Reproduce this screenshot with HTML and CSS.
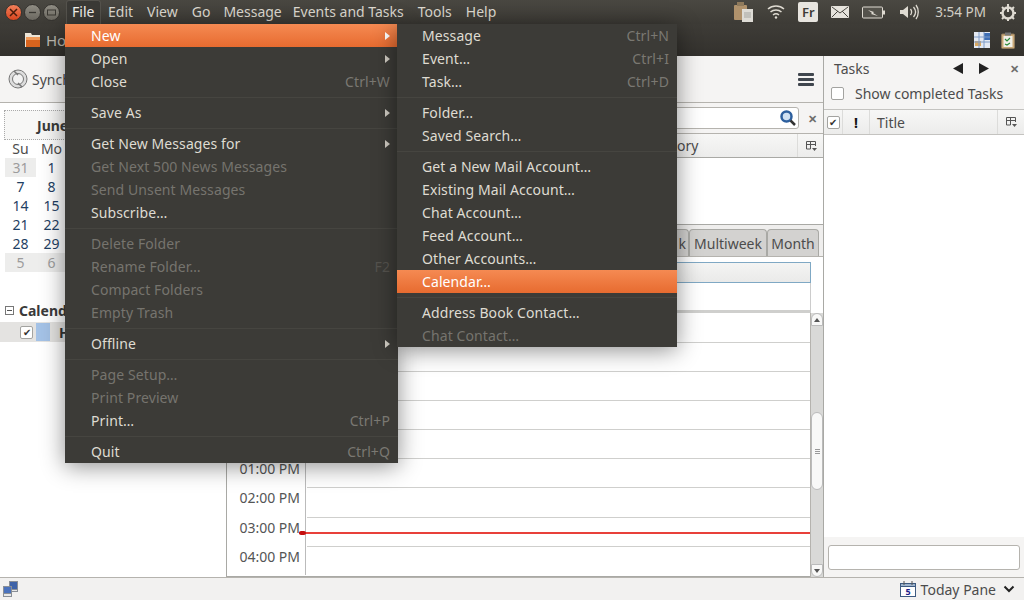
FILE: index.html
```html
<!DOCTYPE html>
<html lang="en">
  <head>
    <meta charset="UTF-8" />
    <title>Thunderbird</title>
    <link rel="stylesheet" href="styles.css">
  </head>

  <body>
    <!-- top panel with global menu -->
    <div class="panel">
      <div class="win-buttons">
        <span class="win-btn win-close">
          <svg width="9" height="9" viewBox="0 0 9 9" fill="none" stroke="#4a1c0c" stroke-width="1.500"><path d="M1 1l7 7M8 1L1 8" /></svg>
        </span>
        <span class="win-btn">
          <svg width="9" height="9" viewBox="0 0 9 9" fill="none" stroke="#3a3833" stroke-width="1.300"><path d="M1 4.500h7" /></svg>
        </span>
        <span class="win-btn">
          <svg width="9" height="9" viewBox="0 0 9 9" fill="none" stroke="#3a3833"><rect x="0.500" y="2" width="8" height="5" /></svg>
        </span>
      </div>
      <nav class="menubar">
        <span class="menubar-item active">File</span>
        <span class="menubar-item">Edit</span>
        <span class="menubar-item">View</span>
        <span class="menubar-item item-go">Go</span>
        <span class="menubar-item">Message</span>
        <span class="menubar-item item-events">Events and Tasks</span>
        <span class="menubar-item">Tools</span>
        <span class="menubar-item">Help</span>
      </nav>
      <div class="indicators">
        <svg width="21" height="24" viewBox="0 0 21 24">
          <rect x="1" y="5" width="13" height="15" rx="1" fill="#b0926c" />
          <rect x="4" y="2" width="7" height="4" fill="#8f7a5c" />
          <rect x="9" y="9" width="11" height="13" fill="#dedcd6" />
          <path d="M11 13h7M11 15h7M11 17h7" stroke="#a5a5a0" />
        </svg>
        <svg width="18" height="24" viewBox="0 0 18 24" fill="none" stroke="#dfdbd2" stroke-width="1.500">
          <path d="M1 9c4.500-4 11.500-4 16 0M3.500 12c3-2.700 8-2.700 11 0M6 15c1.800-1.400 4.200-1.400 6 0" />
          <circle cx="9" cy="17.500" r="1.200" fill="#dfdbd2" stroke="none" />
        </svg>
        <span class="lang-icon">Fr</span>
        <svg width="18" height="24" viewBox="0 0 18 24">
          <rect x="0" y="6" width="18" height="12" rx="1" fill="#e6e3dc" />
          <path d="M1 7l8 6 8-6M1 17l6-6M17 17l-6-6" fill="none" stroke="#4a4842" />
        </svg>
        <svg width="24" height="24" viewBox="0 0 24 24">
          <rect x="0.500" y="7" width="20" height="11" rx="1" fill="#55534c" stroke="#dfdbd2" />
          <rect x="21" y="10.500" width="2" height="4" fill="#dfdbd2" />
          <path d="M6 10l6 2-1 1 5 3-7-2 1-1z" fill="#dfdbd2" />
        </svg>
        <svg width="20" height="24" viewBox="0 0 20 24">
          <path d="M1 10h3l5-4v12l-5-4H1z" fill="#dfdbd2" />
          <path d="M11.500 9c1.500 2 1.500 4 0 6M14.500 7c2.500 3 2.500 7 0 10M17 5c3 4 3 10 0 14" fill="none" stroke="#dfdbd2" stroke-width="1.300" />
        </svg>
        <span class="clock">3:54 PM</span>
        <svg width="18" height="24" viewBox="0 0 18 24" fill="none" stroke="#dfdbd2">
          <circle cx="9" cy="13" r="5.500" stroke-width="2.500" />
          <path d="M9 4v8" stroke-width="2" />
          <path d="M9 5v2M9 18v3M1 13h2M15 13h2M3 7l2 2M13 17l2 2M15 7l-2 2M5 17l-2 2" stroke-width="2" />
        </svg>
      </div>
    </div>

    <!-- tab bar -->
    <div class="tabbar">
      <div class="tab-home">
        <svg width="17" height="16" viewBox="0 0 17 16">
          <path d="M1 1h6l1 2h8v12H1z" fill="#ece4d6" />
          <rect x="2" y="5" width="14" height="10" fill="#d9641e" />
          <rect x="2" y="5" width="14" height="3" fill="#ef9a5a" />
        </svg>
        <span>Ho</span>
      </div>
      <div class="tabbar-icons">
        <svg width="16" height="16" viewBox="0 0 16 16">
          <rect width="16" height="16" fill="#e4e9f2" />
          <rect x="10" y="1" width="6" height="7" fill="#3f6fb5" />
          <rect x="1" y="9" width="6" height="5" fill="#d9a860" />
          <path d="M0 5h16M0 10h16M5 0v16M10 0v16" stroke="#7f9cc8" />
        </svg>
        <svg width="14" height="17" viewBox="0 0 14 17">
          <rect x="0.500" y="2" width="13" height="14.500" rx="1" fill="#c9a878" stroke="#8f7a5c" />
          <rect x="2.500" y="4" width="9" height="11" fill="#f1efe8" />
          <rect x="4" y="0.500" width="6" height="3" fill="#777" />
          <path d="M4 7l2 2 3-3M4 12l2 1 3-2" fill="none" stroke="#2a8a3a" stroke-width="1.200" />
        </svg>
      </div>
    </div>

    <div class="window">
      <div class="content">
        <div class="toolbar">
          <div class="sync">
            <svg width="22" height="24" viewBox="0 0 22 24" fill="none" stroke="#777">
              <circle cx="11" cy="12" r="9" fill="#ddd" />
              <circle cx="11" cy="12" r="5.500" fill="#f2f2f2" />
              <path d="M7 4l4 4M15 20l-4-4" stroke-width="1.500" />
            </svg>
            <span>Synch</span>
          </div>
          <div class="hamburger"><i></i><i></i><i></i></div>
        </div>

        <div class="panes">
          <aside class="sidebar">
            <div class="month-head"><b>June</b></div>
            <div class="month-grid">
              <span class="dow">Su</span><span class="dow">Mo</span>
              <span class="other">31</span><span>1</span>
              <span>7</span><span>8</span>
              <span>14</span><span>15</span>
              <span>21</span><span>22</span>
              <span>28</span><span>29</span>
              <span class="other">5</span><span class="other">6</span>
            </div>
            <div class="cal-title"><span class="minus"></span><b>Calend</b></div>
            <div class="cal-row">
              <span class="check checked">✔</span>
              <span class="swatch"></span>
              <b>H</b>
            </div>
          </aside>

          <main class="centre">
            <div class="search-row">
              <div class="search-box">
                <svg width="18" height="18" viewBox="0 0 18 18" fill="none">
                  <circle cx="7.500" cy="7.500" r="5" stroke="#2d5f9e" stroke-width="2.500" fill="#cfe0f2" />
                  <path d="M11.500 11.500l4.500 4.500" stroke="#333" stroke-width="2.500" />
                </svg>
              </div>
              <span class="close-x">✕</span>
            </div>
            <div class="list-head">
              <span class="list-col">ory</span>
              <span class="col-picker">
                <svg width="12" height="12" viewBox="0 0 12 12" fill="none" stroke="#555">
                  <path d="M1.500 9V1.500h9V6M1.500 4.500h9M5.500 1.500V9H1.500" />
                  <path d="M7 8h5l-2.500 3z" fill="#555" stroke="none" />
                </svg>
              </span>
            </div>
            <div class="list-body"></div>
            <div class="view-tabs">
              <span class="view-tab tab-week">k</span>
              <span class="view-tab tab-multi">Multiweek</span>
              <span class="view-tab tab-month">Month</span>
            </div>
            <div class="day-view">
              <div class="day-head-wrap"><div class="day-head"></div></div>
              <div class="allday"></div>
              <div class="hours">
                <div class="hours-scroll">
                  <div class="hour"><span class="hour-label"></span><span class="hour-cell"></span></div>
                  <div class="hour"><span class="hour-label"></span><span class="hour-cell"></span></div>
                  <div class="hour"><span class="hour-label"></span><span class="hour-cell"></span></div>
                  <div class="hour"><span class="hour-label"></span><span class="hour-cell"></span></div>
                  <div class="hour"><span class="hour-label"></span><span class="hour-cell"></span></div>
                  <div class="hour"><span class="hour-label">01:00 PM</span><span class="hour-cell"></span></div>
                  <div class="hour"><span class="hour-label">02:00 PM</span><span class="hour-cell"></span></div>
                  <div class="hour"><span class="hour-label">03:00 PM</span><span class="hour-cell now"></span></div>
                  <div class="hour"><span class="hour-label">04:00 PM</span><span class="hour-cell"></span></div>
                </div>
                <div class="scrollbar">
                  <span class="arrow arrow-up"></span>
                  <div class="track">
                    <div class="thumb"><i></i><i></i><i></i></div>
                  </div>
                  <span class="arrow arrow-down"></span>
                </div>
              </div>
            </div>
          </main>
        </div>
      </div>

      <aside class="tasks">
        <div class="tasks-head">
          <span class="tasks-title">Tasks</span>
          <svg class="tasks-nav" width="10" height="11" viewBox="0 0 10 11"><path d="M10 0v11L0 5.500z" /></svg>
          <svg class="tasks-nav" width="10" height="11" viewBox="0 0 10 11"><path d="M0 0v11l10-5.500z" /></svg>
          <span class="close-x">✕</span>
        </div>
        <div class="tasks-option"><span class="check"></span>Show completed Tasks</div>
        <div class="tasks-cols">
          <span class="tc tc-check"><span class="check checked">✔</span></span>
          <span class="tc tc-prio"><b>!</b></span>
          <span class="tc tc-title">Title</span>
          <span class="tc tc-pick">
            <svg width="12" height="12" viewBox="0 0 12 12" fill="none" stroke="#555">
              <path d="M1.500 9V1.500h9V6M1.500 4.500h9M5.500 1.500V9H1.500" />
              <path d="M7 8h5l-2.500 3z" fill="#555" stroke="none" />
            </svg>
          </span>
        </div>
        <div class="tasks-list"></div>
        <div class="tasks-foot"><div class="task-input"></div></div>
      </aside>
    </div>

    <footer class="statusbar">
      <svg width="18" height="18" viewBox="0 0 18 18">
        <rect x="8.500" y="1.500" width="8" height="8" fill="#3f63a8" stroke="#8a8f96" />
        <rect x="8.500" y="9.500" width="8" height="2" fill="#e8e8e8" stroke="#8a8f96" />
        <rect x="2.500" y="6.500" width="8" height="7" fill="#4a72bd" stroke="#8a8f96" />
        <rect x="2.500" y="13.500" width="8" height="3" fill="#e8e8e8" stroke="#8a8f96" />
      </svg>
      <div class="today-pane">
        <svg width="16" height="16" viewBox="0 0 16 16">
          <rect x="0.500" y="2.500" width="15" height="13" fill="#fff" stroke="#3d5a80" />
          <rect x="0.500" y="2.500" width="15" height="3" fill="#9db3cc" stroke="#3d5a80" />
          <path d="M4 0v4M12 0v4" stroke="#555" />
          <text x="8" y="14" text-anchor="middle" class="cal-day">5</text>
        </svg>
        <span>Today Pane</span>
        <svg class="chevron" width="12" height="8" viewBox="0 0 12 8" fill="none" stroke="#222" stroke-width="2">
          <path d="M1.500 1.500L6 6l4.500-4.500" />
        </svg>
      </div>
    </footer>

    <!-- open menus -->
    <div class="menu file-menu">
      <div class="menu-item hot"><span>New</span><i class="caret"></i></div>
      <div class="menu-item"><span>Open</span><i class="caret"></i></div>
      <div class="menu-item"><span>Close</span><em>Ctrl+W</em></div>
      <hr />
      <div class="menu-item"><span>Save As</span><i class="caret"></i></div>
      <hr />
      <div class="menu-item"><span>Get New Messages for</span><i class="caret"></i></div>
      <div class="menu-item off"><span>Get Next 500 News Messages</span></div>
      <div class="menu-item off"><span>Send Unsent Messages</span></div>
      <div class="menu-item"><span>Subscribe…</span></div>
      <hr />
      <div class="menu-item off"><span>Delete Folder</span></div>
      <div class="menu-item off"><span>Rename Folder…</span><em>F2</em></div>
      <div class="menu-item off"><span>Compact Folders</span></div>
      <div class="menu-item off"><span>Empty Trash</span></div>
      <hr />
      <div class="menu-item"><span>Offline</span><i class="caret"></i></div>
      <hr />
      <div class="menu-item off"><span>Page Setup…</span></div>
      <div class="menu-item off"><span>Print Preview</span></div>
      <div class="menu-item"><span>Print…</span><em>Ctrl+P</em></div>
      <hr />
      <div class="menu-item"><span>Quit</span><em>Ctrl+Q</em></div>
    </div>

    <div class="menu new-menu">
      <div class="menu-item"><span>Message</span><em>Ctrl+N</em></div>
      <div class="menu-item"><span>Event…</span><em>Ctrl+I</em></div>
      <div class="menu-item"><span>Task…</span><em>Ctrl+D</em></div>
      <hr />
      <div class="menu-item"><span>Folder…</span></div>
      <div class="menu-item"><span>Saved Search…</span></div>
      <hr />
      <div class="menu-item"><span>Get a New Mail Account…</span></div>
      <div class="menu-item"><span>Existing Mail Account…</span></div>
      <div class="menu-item"><span>Chat Account…</span></div>
      <div class="menu-item"><span>Feed Account…</span></div>
      <div class="menu-item"><span>Other Accounts…</span></div>
      <div class="menu-item hot"><span>Calendar…</span></div>
      <hr />
      <div class="menu-item"><span>Address Book Contact…</span></div>
      <div class="menu-item off"><span>Chat Contact…</span></div>
    </div>
  </body>
</html>
```

FILE: styles.css
```css
* {
  margin: 0;
  padding: 0;
  box-sizing: border-box;
}
html,
body {
  width: 1024px;
  height: 600px;
  overflow: hidden;
}
body {
  font-family: "Noto Sans", sans-serif;
  font-size: 14px;
  color: #4c4c4c;
  background-color: #f2f1f0;
  display: flex;
  flex-direction: column;
}

/* panel */
.panel {
  height: 24px;
  flex: none;
  display: flex;
  align-items: center;
  background: linear-gradient(#4a4842, #3d3b36);
  color: #dfdbd2;
}
.win-buttons {
  display: flex;
  gap: 2px;
  width: 66px;
  padding-left: 5px;
}
.win-btn {
  width: 17px;
  height: 17px;
  display: flex;
  align-items: center;
  justify-content: center;
  border-radius: 50%;
  background: linear-gradient(#8f8c83, #6b6860);
  border: 1px solid #35332f;
}
.win-close {
  background: linear-gradient(#f2805a, #d9451f);
}
.menubar {
  display: flex;
  height: 24px;
}
.menubar-item {
  padding: 0 7px;
  line-height: 24px;
  white-space: nowrap;
}
.menubar-item.active {
  width: 35px;
  padding: 0 5px;
  color: #f5f3ee;
  background-color: #3b3a36;
  border: 1px solid #55534d;
  border-bottom: none;
  border-radius: 3px 3px 0 0;
  line-height: 22px;
}
.menubar-item.item-go {
  padding-right: 6px;
}
.menubar-item.item-events {
  margin-left: -3px;
}
.indicators {
  margin-left: auto;
  display: flex;
  align-items: center;
  gap: 13px;
  padding-right: 7px;
}
.lang-icon {
  width: 20px;
  height: 20px;
  border-radius: 2px;
  background-color: #e8e5df;
  color: #3c3b37;
  font-size: 13px;
  font-weight: 600;
  line-height: 20px;
  text-align: center;
}
.clock {
  margin-left: 3px;
  font-size: 13.500px;
  color: #d2cec5;
  white-space: nowrap;
}

/* tab bar */
.tabbar {
  height: 32px;
  flex: none;
  display: flex;
  align-items: center;
  justify-content: space-between;
  padding: 0 9px 0 24px;
  background: linear-gradient(#3e3c37, #33312d);
  color: #bdb9b0;
}
.tab-home {
  display: flex;
  align-items: center;
  gap: 5px;
  font-size: 15px;
}
.tabbar-icons {
  display: flex;
  align-items: center;
  gap: 11px;
}

/* main window */
.window {
  flex: 1;
  display: flex;
  min-height: 0;
  background-color: #fff;
}
.content {
  flex: 1;
  min-width: 0;
  display: flex;
  flex-direction: column;
  border-right: 1px solid #a9a9a5;
}
.toolbar {
  height: 47px;
  flex: none;
  display: flex;
  align-items: center;
  justify-content: space-between;
  padding: 0 9px 0 7px;
  background-color: #f5f4f3;
  border-bottom: 1px solid #b5b3ae;
}
.sync {
  display: flex;
  align-items: center;
  gap: 3px;
}
.hamburger {
  display: flex;
  flex-direction: column;
  gap: 2px;
}
.hamburger i {
  width: 16px;
  height: 3px;
  border-radius: 1px;
  background-color: #40464e;
}
.panes {
  flex: 1;
  display: flex;
  min-height: 0;
}

/* sidebar */
.sidebar {
  width: 227px;
  flex: none;
  padding: 7px 0 0 5px;
  border-right: 1px solid #a9a9a5;
  overflow: hidden;
}
.month-head {
  height: 30px;
  margin: 0 0 -1px -1px;
  padding-left: 32px;
  line-height: 30px;
  border: 1px dotted #aaa;
  background-color: #f7f7f6;
  color: #3a3a3a;
}
.month-grid {
  display: grid;
  grid-template-columns: repeat(2, 31px);
  grid-auto-rows: 19px;
  color: #1f3f63;
  text-align: center;
  line-height: 19px;
}
.month-grid .dow {
  color: #4c4c4c;
}
.month-grid .other {
  background-color: #ededec;
  color: #9c9c9c;
}
.cal-title {
  display: flex;
  align-items: center;
  gap: 5px;
  margin-top: 27px;
  height: 22px;
  color: #3a3a3a;
}
.minus {
  width: 9px;
  height: 9px;
  border: 1px solid #777;
  background: linear-gradient(#555, #555) center / 5px 1px no-repeat #fff;
}
.cal-row {
  display: flex;
  align-items: center;
  height: 20px;
  margin: 1px 0 0 -5px;
  padding-left: 20px;
  background-color: #e4e3e1;
  color: #333;
}
.cal-row .swatch {
  width: 14px;
  height: 18px;
  margin: 0 9px 0 3px;
  background-color: #a4c2e6;
}
.check {
  width: 13px;
  height: 13px;
  flex: none;
  display: inline-block;
  border: 1px solid #a3a3a0;
  border-radius: 2px;
  background-color: #fff;
  color: #333;
  font-size: 10px;
  line-height: 11px;
  text-align: center;
}

/* centre */
.centre {
  flex: 1;
  min-width: 0;
  display: flex;
  flex-direction: column;
}
.search-row {
  height: 31px;
  flex: none;
  display: flex;
  align-items: center;
  padding-left: 6px;
  background-color: #f5f4f3;
  border-bottom: 1px solid #b5b3ae;
}
.search-box {
  flex: 1;
  height: 22px;
  display: flex;
  align-items: center;
  justify-content: flex-end;
  padding-right: 1px;
  background-color: #fff;
  border: 1px solid #b5b3ae;
  border-radius: 3px;
}
.close-x {
  width: 24px;
  flex: none;
  color: #6d6d6b;
  font-size: 11px;
  font-weight: bold;
  text-align: center;
  padding-left: 2px;
}
.list-head {
  height: 24px;
  flex: none;
  display: flex;
  align-items: center;
  justify-content: space-between;
  background: linear-gradient(#f7f7f6, #ececeb);
  border-bottom: 1px solid #a9a9a5;
}
.list-col {
  margin-left: 450px;
}
.col-picker {
  width: 26px;
  height: 23px;
  display: flex;
  align-items: center;
  justify-content: center;
  border-left: 1px solid #dcdcda;
}
.list-body {
  height: 67px;
  flex: none;
  background-color: #fff;
  border-bottom: 1px solid #a9a9a5;
}
.view-tabs {
  height: 32px;
  flex: none;
  display: flex;
  justify-content: flex-end;
  align-items: flex-end;
  padding-right: 4px;
  background-color: #efeeed;
  border-bottom: 1px solid #b5b3ae;
}
.view-tab {
  height: 27px;
  line-height: 27px;
  text-align: center;
  background-color: #d3d2d0;
  border: 1px solid #a9a9a5;
  border-bottom: none;
  border-radius: 4px 4px 0 0;
}
.tab-week {
  width: 30px;
  padding-right: 2px;
  text-align: right;
}
.tab-multi {
  width: 78px;
}
.tab-month {
  width: 52px;
}
.day-view {
  flex: 1;
  min-height: 0;
  display: flex;
  flex-direction: column;
  background-color: #fff;
}
.day-head-wrap {
  height: 26px;
  flex: none;
  padding: 5px 12px 0 80px;
}
.day-head {
  height: 21px;
  border: 1px solid #7fa8c4;
  background: linear-gradient(#f4f4f3, #eaeae9);
}
.allday {
  height: 30px;
  flex: none;
  margin-right: 12px;
  border-right: 1px solid #ccc;
  border-bottom: 3px solid #cfcfcd;
}
.hours {
  flex: 1;
  min-height: 0;
  display: flex;
}
.hours-scroll {
  flex: 1;
  min-width: 0;
  overflow: hidden;
  display: flex;
  flex-direction: column;
  justify-content: flex-end;
  padding-bottom: 1px;
  border-bottom: 1px solid #a9a9a5;
}
.hour {
  height: 29.200px;
  flex: none;
  display: flex;
}
.hour-label {
  width: 79px;
  flex: none;
  padding-right: 5px;
  line-height: 21px;
  text-align: right;
  color: #555;
  border-right: 1px solid #bbb;
}
.hour-cell {
  flex: 1;
  position: relative;
  margin-left: 1px;
  border-top: 1px solid #cfcfcd;
}
.now::after {
  content: "";
  position: absolute;
  left: -8px;
  right: 0;
  top: 14px;
  height: 2px;
  background-color: #e8403a;
}
.now::before {
  content: "";
  position: absolute;
  left: -8px;
  top: 13px;
  z-index: 1;
  width: 7px;
  height: 4px;
  border-radius: 2px;
  background-color: #c40f0f;
}
.scrollbar {
  width: 13px;
  flex: none;
  display: flex;
  flex-direction: column;
  background-color: #d9d9d7;
  border: 1px solid #b5b3ae;
  border-width: 0 0 0 1px;
}
.arrow {
  height: 13px;
  flex: none;
  display: flex;
  align-items: center;
  justify-content: center;
  background-color: #f8f8f7;
  border: 1px solid #bbb;
}
.arrow::after {
  content: "";
  border-left: 3px solid transparent;
  border-right: 3px solid transparent;
}
.arrow-up {
  border-radius: 6px 6px 0 0;
}
.arrow-up::after {
  border-bottom: 4px solid #555;
}
.arrow-down {
  border-radius: 0 0 6px 6px;
}
.arrow-down::after {
  border-top: 4px solid #555;
}
.track {
  flex: 1;
  display: flex;
  align-items: flex-end;
  padding-bottom: 74px;
}
.thumb {
  width: 100%;
  height: 78px;
  display: flex;
  flex-direction: column;
  align-items: center;
  justify-content: center;
  gap: 1px;
  background-color: #f8f8f7;
  border: 1px solid #bbb;
  border-radius: 6px;
}
.thumb i {
  width: 5px;
  height: 1px;
  background-color: #999;
}

/* tasks pane */
.tasks {
  width: 200px;
  flex: none;
  display: flex;
  flex-direction: column;
  background-color: #f5f4f3;
}
.tasks-head {
  height: 25px;
  flex: none;
  display: flex;
  align-items: center;
  padding: 0 1px 0 10px;
}
.tasks-title {
  flex: 1;
}
.tasks-nav {
  margin-right: 16px;
  fill: #222;
}
.tasks-head .close-x {
  width: 20px;
  margin-left: -2px;
}
.tasks-option {
  height: 28px;
  flex: none;
  display: flex;
  align-items: center;
  gap: 11px;
  padding: 0 0 4px 7px;
}
.tasks-cols {
  height: 26px;
  flex: none;
  display: flex;
  background: linear-gradient(#f7f7f6, #ececeb);
  border-top: 1px solid #c4c3c0;
  border-bottom: 1px solid #c4c3c0;
}
.tc {
  display: flex;
  align-items: center;
  justify-content: center;
  border-right: 1px solid #dcdcda;
}
.tc-check {
  width: 19px;
}
.tc-prio {
  width: 27px;
  color: #111;
}
.tc-title {
  flex: 1;
  justify-content: flex-start;
  padding-left: 7px;
}
.tc-pick {
  width: 26px;
  border-right: none;
}
.tasks-list {
  flex: 1;
  background-color: #fff;
}
.tasks-foot {
  height: 40px;
  flex: none;
  padding: 8px 4px 0;
}
.task-input {
  height: 25px;
  background-color: #fff;
  border: 1px solid #b5b3ae;
  border-radius: 3px;
}

/* status bar */
.statusbar {
  height: 23px;
  flex: none;
  display: flex;
  align-items: center;
  justify-content: space-between;
  padding: 0 9px 0 1px;
  border-top: 1px solid #b5b3ae;
}
.today-pane {
  display: flex;
  align-items: center;
  gap: 5px;
}
.chevron {
  margin-left: 2px;
}
.cal-day {
  font-size: 9px;
  font-weight: bold;
  fill: #1c1c8a;
}

/* menus */
.menu {
  position: absolute;
  top: 24px;
  background-color: #3c3b37;
  color: #dfdbd2;
  letter-spacing: 0.1px;
  box-shadow: 0 3px 22px rgba(0, 0, 0, 0.45);
}
.file-menu {
  left: 65px;
  width: 333px;
}
.new-menu {
  left: 397px;
  width: 280px;
}
.menu-item {
  height: 23px;
  display: flex;
  align-items: center;
  justify-content: space-between;
  padding: 0 8px 0 26px;
  white-space: nowrap;
}
.new-menu .menu-item {
  padding-left: 25px;
}
.menu-item em {
  font-style: normal;
  color: #7a7872;
}
.menu-item.off em {
  color: #55534e;
}
.menu-item.hot {
  color: #fff;
  background: linear-gradient(#f58a52, #e76b30);
}
.menu-item.off {
  color: #76746e;
}
.menu hr {
  height: 8px;
  border: none;
  background: linear-gradient(#464540, #464540) center / 100% 1px no-repeat;
}
.caret {
  width: 0;
  height: 0;
  border-left: 5px solid #cfcbc2;
  border-top: 4px solid transparent;
  border-bottom: 4px solid transparent;
}
.hot .caret {
  border-left-color: #fff;
}
```
